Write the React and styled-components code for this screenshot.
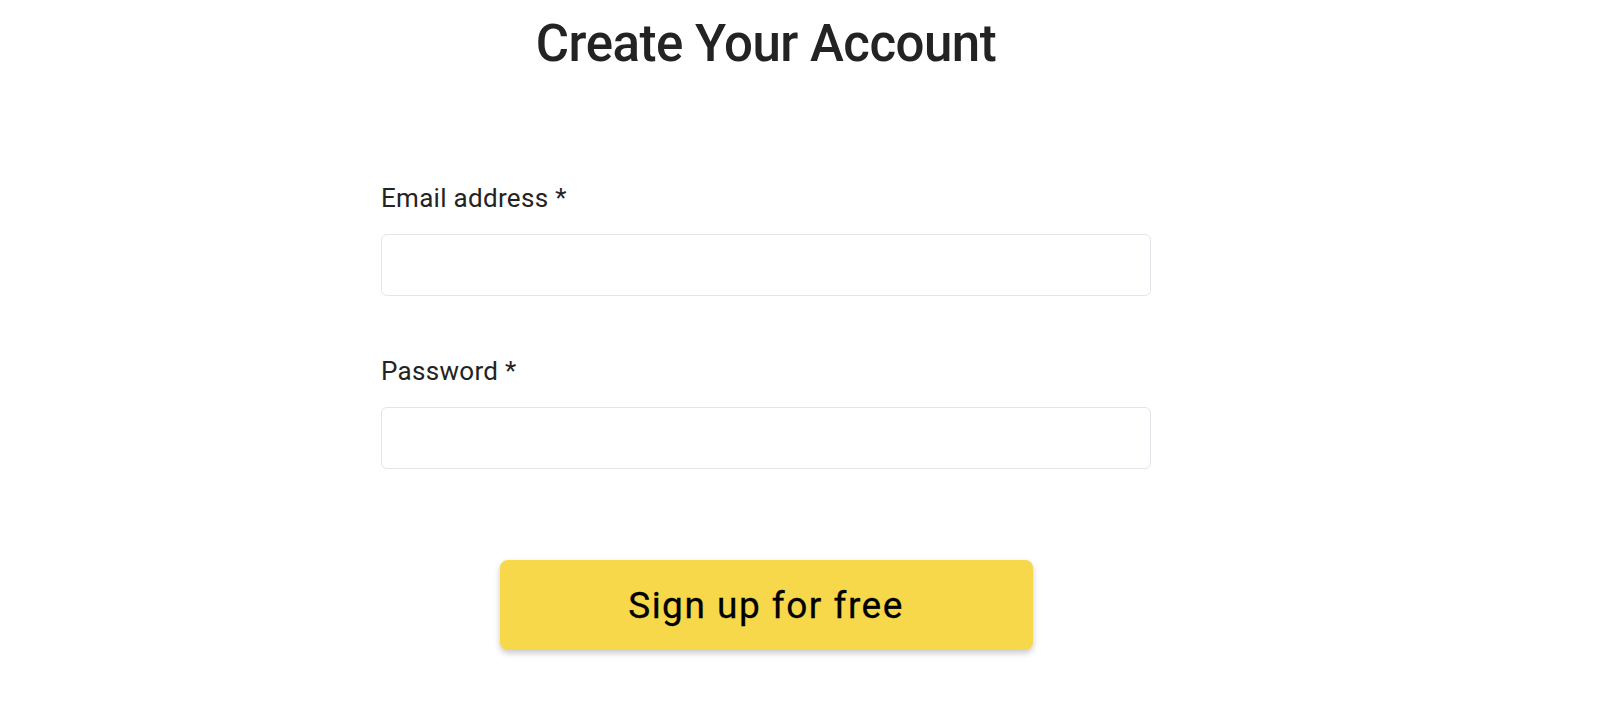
import React from "react";
import styled, { createGlobalStyle } from "styled-components";

const GlobalStyle = createGlobalStyle`
  html, body { margin: 0; padding: 0; background: #ffffff; }
  body { font-family: Roboto, "Open Sans", Arial, sans-serif; color: #222222; }
  * { box-sizing: border-box; }
`;

const Page = styled.main`
  display: flex;
  justify-content: center;
  padding: 0 68px 0 0;
  min-height: 710px;
`;

const Column = styled.div`
  width: 770px;
  display: flex;
  flex-direction: column;
`;

const Title = styled.h1`
  margin: 14px 0 0;
  font-size: 51px;
  line-height: 60px;
  font-weight: 500;
  text-align: center;
  color: #232323;
  letter-spacing: -0.5px;
`;

const Form = styled.form`
  display: flex;
  flex-direction: column;
  margin-top: 109px;
`;

const Field = styled.div`
  display: flex;
  flex-direction: column;
  gap: 21px;
  margin-bottom: ${(p) => p.$spacing}px;
`;

const Label = styled.label`
  font-size: 26px;
  line-height: 30px;
  font-weight: 400;
  letter-spacing: 0.3px;
  color: #232323;
`;

const Input = styled.input`
  width: 100%;
  height: 62px;
  border: 1px solid #e2e5ea;
  border-radius: 6px;
  padding: 0 16px;
  font-size: 20px;
  font-family: inherit;
  outline: none;
`;

const ButtonRow = styled.div`
  display: flex;
  justify-content: center;
  margin-top: 91px;
`;

const Button = styled.button`
  width: 533px;
  height: 90px;
  border: none;
  border-radius: 8px;
  background: #f6d84a;
  box-shadow: 0 3px 6px rgba(0, 0, 0, 0.22);
  font-family: inherit;
  font-size: 37px;
  font-weight: 400;
  letter-spacing: 1.5px;
  color: #000000;
  -webkit-text-stroke: 0.3px #000000;
  cursor: pointer;
`;

export default function App() {
  return (
    <>
      <GlobalStyle />
      <Page>
        <Column>
          <Title>Create Your Account</Title>
          <Form onSubmit={(e) => e.preventDefault()}>
            <Field $spacing={60}>
              <Label htmlFor="email">Email address *</Label>
              <Input id="email" type="email" />
            </Field>
            <Field $spacing={0}>
              <Label htmlFor="password">Password *</Label>
              <Input id="password" type="password" />
            </Field>
            <ButtonRow>
              <Button type="submit">Sign up for free</Button>
            </ButtonRow>
          </Form>
        </Column>
      </Page>
    </>
  );
}
